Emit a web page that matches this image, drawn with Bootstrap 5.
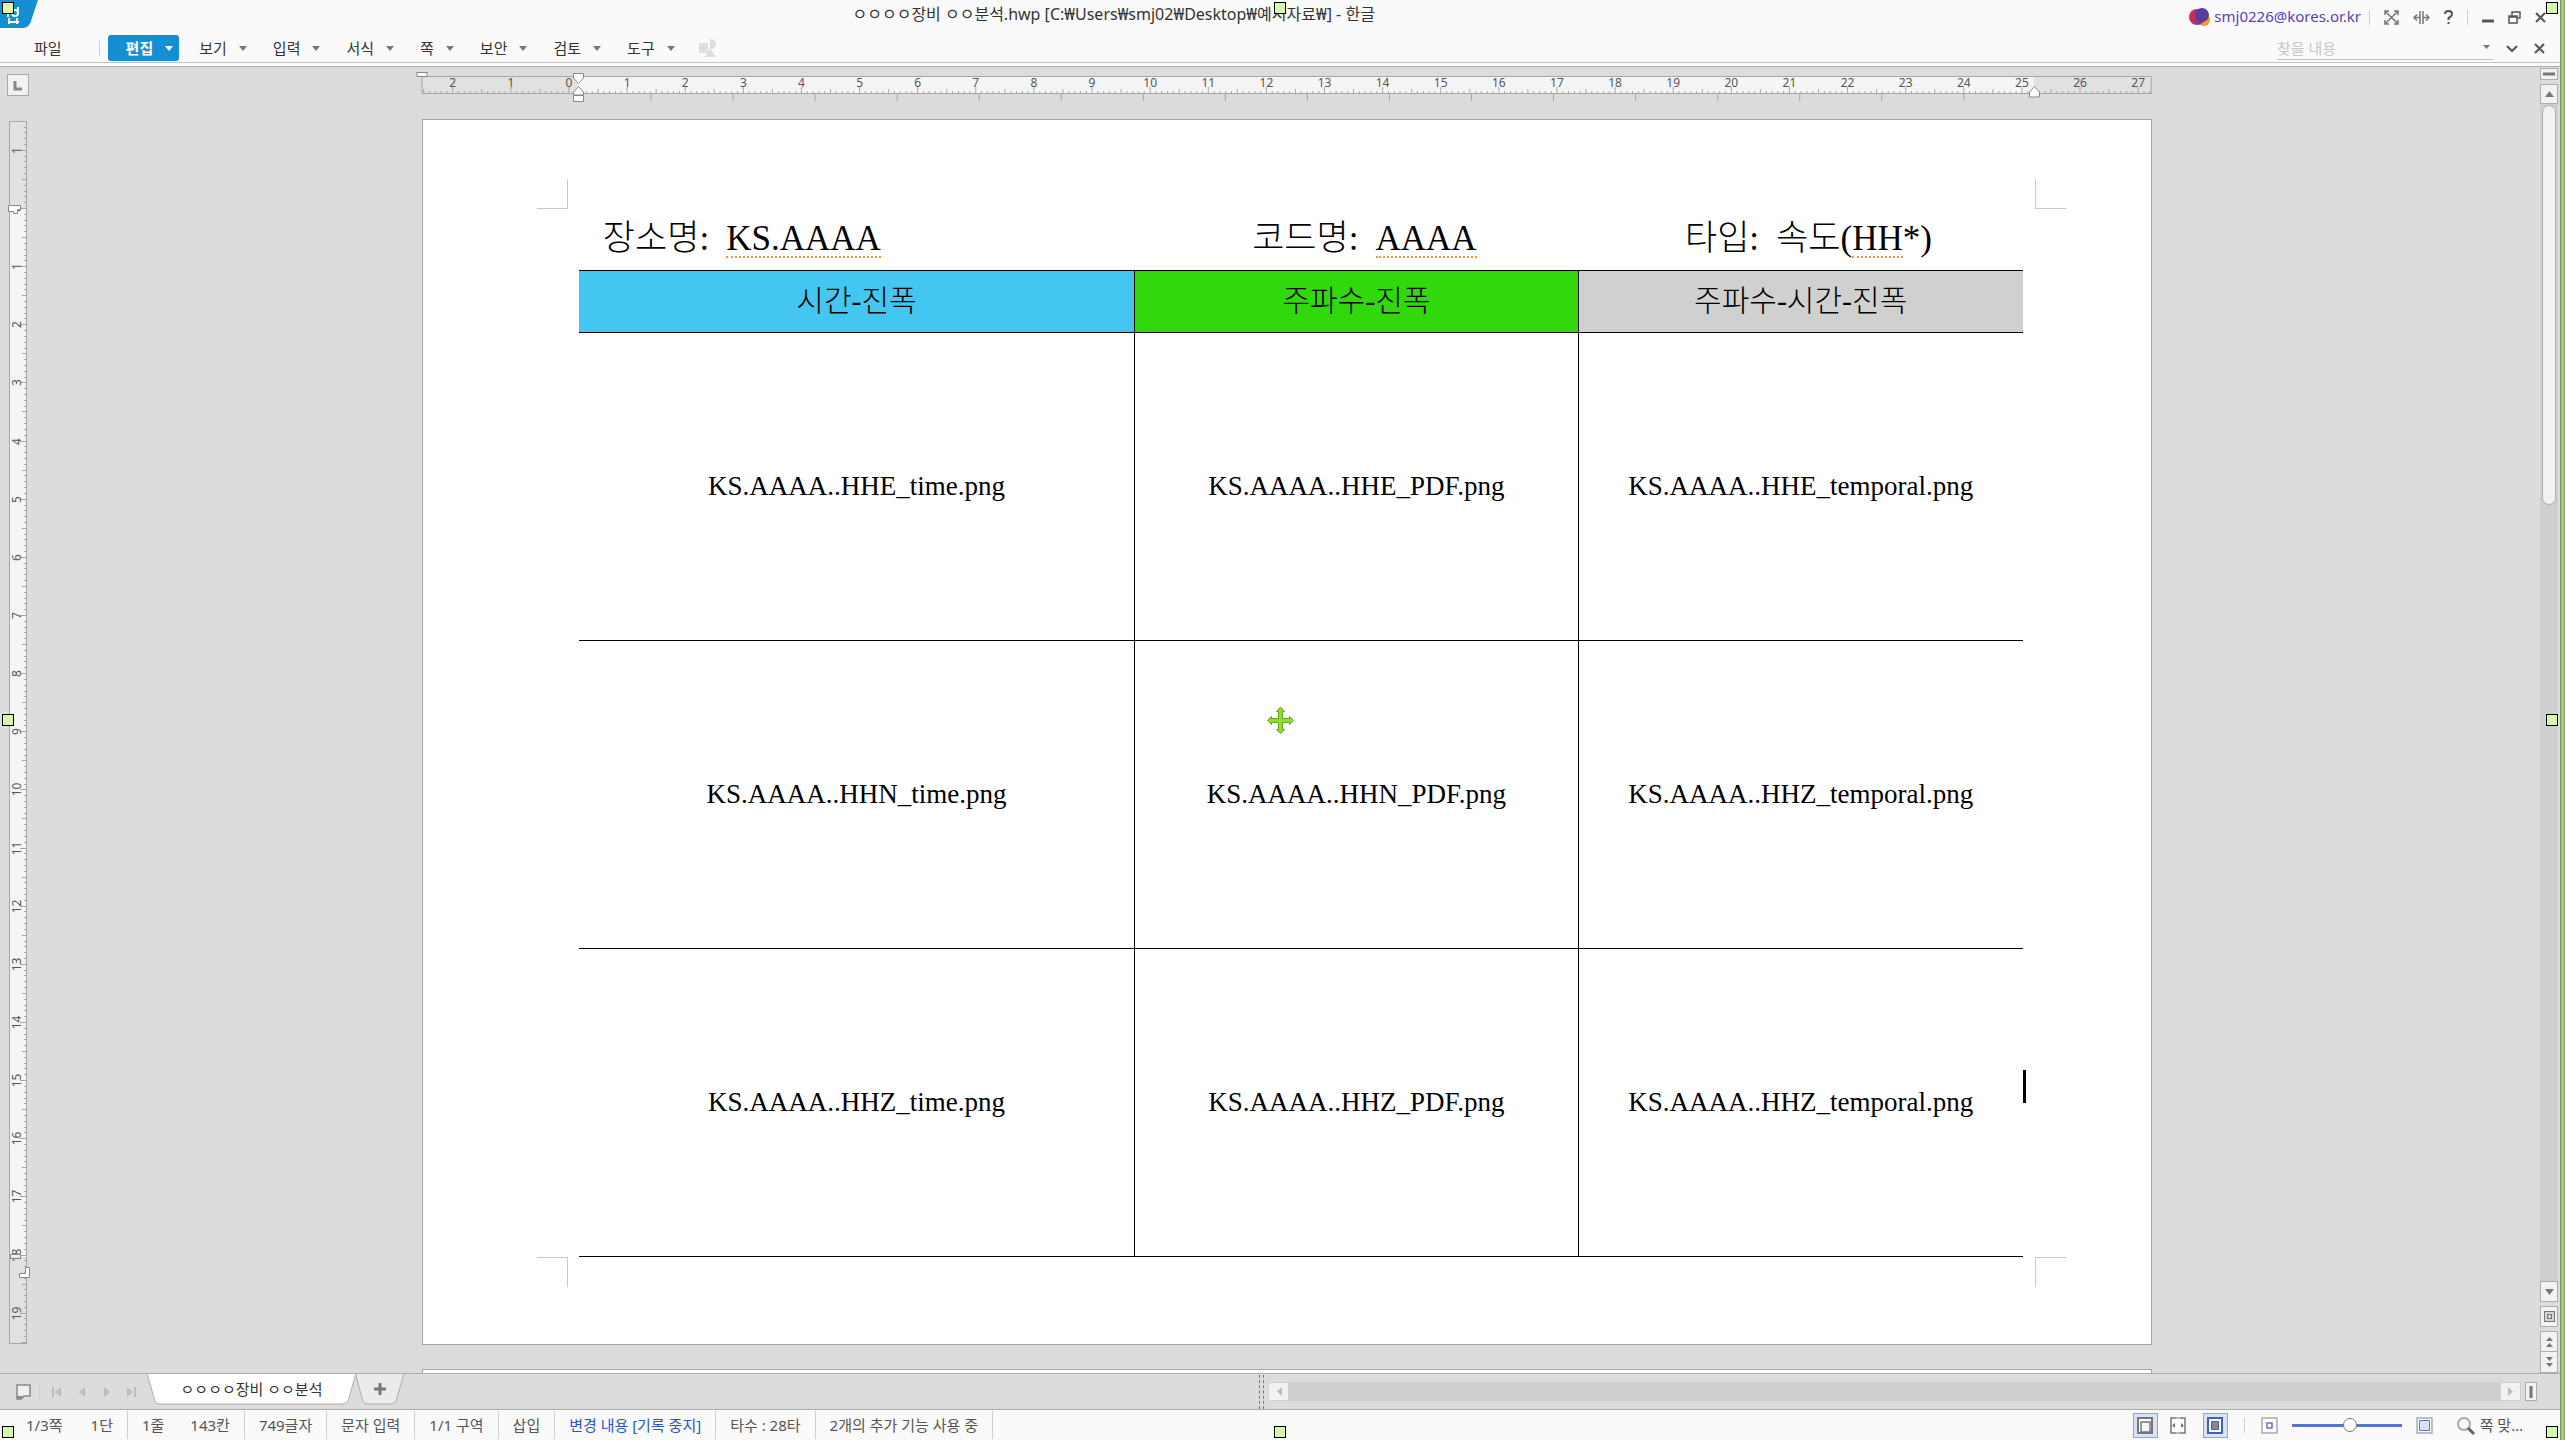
<!DOCTYPE html>
<html lang="ko">
<head>
<meta charset="utf-8">
<meta name="viewport" content="width=device-width, initial-scale=1">
<title>ㅇㅇㅇㅇ장비 ㅇㅇ분석.hwp - 한글</title>
<link rel="stylesheet" href="https://cdn.jsdelivr.net/npm/bootstrap@5.3.0/dist/css/bootstrap.min.css">
<style>
  body { font: 15px/20px "Noto Sans", "Noto Sans CJK KR", sans-serif; color: #333; background: #dcdcdc; }
  svg { display: block; flex: none; }
  button { border: 0; background: none; padding: 0; color: inherit; line-height: 20px; }
  .app-head { background: #fafafa; height: 67px; border-bottom: 1px solid #adadad; }
  .head-rows { height: 63px; border-bottom: 1px solid #c4c4c4; }
  .title-row { height: 34px; }
  .title-text { padding-bottom: 6px; font-size: 16px; }
  .title-tools { gap: 14px; padding-right: 19px; }
  .account { color: #5a3fb5; text-decoration: none; padding-bottom: 2px; }
  .v-sep { width: 1px; height: 15px; background: #d0d0d0; }
  .menu-row { height: 28px; }
  .menu-btn { height: 26px; padding: 0 6px 0 18px; gap: 12px; border-radius: 3px; font-family: "Noto Sans CJK KR", sans-serif; }
  .menu-btn.is-on { background: #148fd2; color: #fff; font-weight: 700; }
  .menu-btn::after { content: ""; border: 4px solid transparent; border-top: 5px solid #777; border-bottom: 0; }
  .menu-btn.is-on::after { border-top-color: #fff; }
  .menu-file { padding: 0 37px 0 34px; font-family: "Noto Sans CJK KR", sans-serif; }
  .find-box { width: 217px; border-bottom: 1px solid #c4c4c4; }
  .find-box input { border: 0; background: none; padding: 0; outline: 0; width: 190px; height: 22px; }
  .find-box input::placeholder { color: #c6c6c6; }
  .side-col { width: 34px; }
  .tab-kind { width: 22px; height: 22px; margin: 7px 0 1px 7px; background: #f2f2f2; border: 1px solid #a8a8a8; }
  .sheet { width: 69%; background: #fff; border: 1px solid #a6a6a6; }
  .sheet-main { height: 1226px; padding: 91px 5.1% 0 6.2%; }
  .crop-mark { position: absolute; width: 31px; height: 30px; border: 0 solid #c8c8c8; }
  .mark-tl { left: 6.6%; top: 59px; border-width: 0 1px 1px 0; }
  .mark-tr { right: 4.900%; top: 59px; border-width: 0 0 1px 1px; }
  .mark-bl { left: 6.6%; bottom: 57px; border-width: 1px 1px 0 0; }
  .mark-br { right: 4.900%; bottom: 57px; border-width: 1px 0 0 1px; }
  .doc { font-family: "Liberation Serif", "Noto Sans CJK KR", serif; color: #000; font-weight: 300; }
  .doc-head { height: 59px; padding-top: 3px; font-size: 35px; line-height: 50px; }
  .doc-head > div { gap: 17px; }
  .c-a { width: 38.5%; } .c-b { width: 30.7%; } .c-c { width: 30.8%; }
  .spell { border-bottom: 2px dotted #e9964d; line-height: 34px; display: inline-block; }
  .doc-table { width: 100%; table-layout: fixed; border-collapse: collapse; font-size: 27px; text-align: center; }
  .doc-table th { height: 62px; font-size: 30px; font-weight: 300; }
  .doc-table th, .doc-table td { border: 1px solid #000; vertical-align: middle; padding: 0 0 2px; }
  .doc-table tr > :first-child { border-left: 0; }
  .doc-table tr > :last-child { border-right: 0; }
  .doc-table td { height: 308px; }
  .bg-time { background: #43c7f1; } .bg-freq { background: #31d80b; } .bg-both { background: #d0d0d0; }
  .caret { position: absolute; right: -3px; top: 121px; width: 3px; height: 33px; background: #000; }
  .scroll-col { width: 25px; padding: 1px 7px 0 0; }
  .s-btn { background: #f2f2f2; border: 1px solid #adadad; display: flex; align-items: center; justify-content: center; flex: none; }
  .s-track { background: #cfcfcf; }
  .s-thumb { height: 400px; background: #f2f2f2; border: 1px solid #adadad; border-radius: 7px; margin: 1px 2px; }
  .tab-bar { height: 37px; border-top: 1px solid #adadad; border-bottom: 1px solid #adadad; }
  .tab-side { width: 49.1%; }
  .doc-tab { background: none; position: relative; height: 31px; margin-left: 11px; }
  .doc-tab span { position: absolute; left: 0; right: 0; top: 5px; }
  .h-track { background: #cfcfcf; height: 19px; }
  .h-btn { width: 21px; height: 19px; background: #f2f2f2; border: 1px solid #d0d0d0; }
  .splitter { width: 5px; height: 34px; border: dashed #777; border-width: 0 1px; }
  .status { height: 30px; background: #fafafa; color: #555; font-size: 15px; padding-left: 12px; }
  .status > .st { padding: 0 14px; line-height: 28px; white-space: nowrap; }
  .status > .st-line { border-right: 1px solid #d0d0d0; }
  .status > .st-link { color: #2a55c4; }
  .status-tools { padding-right: 42px; }
  .view-btn { width: 25px; height: 25px; display: flex; align-items: center; justify-content: center; }
  .view-btn.is-on { background: #dae3f6; border: 1px solid #8da5dc; }
  .zoom-range { -webkit-appearance: none; appearance: none; width: 110px; height: 15px; background: none; margin: 0 14px; }
  .zoom-range::-webkit-slider-runnable-track { height: 3px; background: #5876c9; }
  .zoom-range::-webkit-slider-thumb { -webkit-appearance: none; width: 14px; height: 14px; margin-top: -6px; border-radius: 50%; background: #fff; border: 1px solid #777; }
  .overlay { position: absolute; inset: 0; padding: 2px 7px 2px 2px; pointer-events: none; }
  .grip { width: 12px; height: 12px; background: #d6f7ac; border: 1px solid #000; }
  .edge { position: absolute; right: 0; top: 0; bottom: 0; width: 5px; background: #95da45; border-left: 1px solid #7d8a86; border-right: 1px solid #7fae55; }
  .ruler text { font: 12px "Noto Sans", sans-serif; fill: #555; text-anchor: middle; }
</style>
<script src="https://cdn.jsdelivr.net/npm/bootstrap@5.3.0/dist/js/bootstrap.bundle.min.js"></script>
</head>
<body class="vh-100 overflow-hidden position-relative d-flex flex-column">

<header class="app-head flex-shrink-0">
  <div class="head-rows">
    <div class="title-row d-flex align-items-center">
      <svg class="align-self-start" width="38" height="28" viewBox="0 0 38 28"><path d="M0 0h38l-7 21q-2 7-8 7H0z" fill="#148fd2"/><g fill="none" stroke="#fff" stroke-width="2"><path d="M9 18v6M9 22h10M17 18v6"/><circle cx="15" cy="13" r="3"/><path d="M8 9v8M18 7v4"/></g></svg>
      <div class="title-text flex-grow-1 text-center">ㅇㅇㅇㅇ장비 ㅇㅇ분석.hwp [C:₩Users₩smj02₩Desktop₩예시자료₩] - 한글</div>
      <div class="title-tools d-flex align-items-center">
        <div class="d-flex align-items-center">
          <svg width="21" height="18" viewBox="0 0 21 18"><defs><linearGradient id="lg" x1="0" x2="1"><stop offset="0" stop-color="#f0283c"/><stop offset=".7" stop-color="#6a3c98"/></linearGradient></defs><circle cx="15" cy="12" r="6" fill="#f79a1f"/><circle cx="8" cy="9" r="8" fill="url(#lg)"/><circle cx="13" cy="7" r="7" fill="#5a3c9c"/></svg>
          <a href="#" class="account ms-1">smj0226@kores.or.kr</a>
          <div class="v-sep ms-2"></div>
        </div>
        <button aria-label="전체 화면"><svg width="15" height="15" viewBox="0 0 15 15" fill="none" stroke="#777" stroke-width="1.500"><path d="M1 5V1h4M10 1h4v4M14 10v4h-4M5 14H1v-4M2 2l11 11M13 2L2 13"/></svg></button>
        <button aria-label="너비"><svg width="17" height="15" viewBox="0 0 17 15" fill="none" stroke="#777"><path d="M7 1v13M10 1v13" stroke-width="1.500"/><path d="M1 7.500h6M10 7.500h6M4 4.500l-3 3 3 3M13 4.500l3 3-3 3" stroke-width="1.500"/></svg></button>
        <button aria-label="도움말"><svg width="9" height="14" viewBox="0 0 9 14" fill="none" stroke="#555" stroke-width="2"><path d="M1 4q0-3 3.500-3T8 4q0 2-2 3T4.500 10M4.500 12v2"/></svg></button>
        <div class="v-sep"></div>
        <button aria-label="최소화"><svg width="12" height="14"><path d="M0 11h12" stroke="#555" stroke-width="3"/></svg></button>
        <button aria-label="이전 크기로"><svg width="13" height="13" viewBox="0 0 13 13" fill="none" stroke="#555" stroke-width="1.500"><path d="M4 4V1h8v6H9M1 5h8v7H1zM1 6h8"/></svg></button>
        <button aria-label="닫기"><svg width="11" height="11" viewBox="0 0 11 11"><path d="M1 1l9 9M10 1l-9 9" stroke="#555" stroke-width="2"/></svg></button>
      </div>
    </div>
    <nav class="menu-row d-flex align-items-center">
      <button class="menu-file">파일</button>
      <div class="v-sep me-2"></div>
      <div class="d-flex gap-0 flex-grow-1 align-items-center" id="menus"></div>
      <div class="find-box d-flex align-items-center justify-content-between pe-1"><input type="text" placeholder="찾을 내용" aria-label="찾을 내용"><svg width="7" height="5"><path d="M0 0h7l-3.500 4z" fill="#777"/></svg></div>
      <button class="ms-2 ps-1" aria-label="다음"><svg width="12" height="9" viewBox="0 0 12 9"><path d="M1 2l5 5 5-5" fill="none" stroke="#555" stroke-width="2"/></svg></button>
      <button class="ms-3 me-3 pe-1" aria-label="찾기 닫기"><svg width="11" height="11" viewBox="0 0 11 11"><path d="M1 1l9 9M10 1l-9 9" stroke="#555" stroke-width="2"/></svg></button>
    </nav>
  </div>
</header>

<main class="flex-grow-1 d-flex overflow-hidden">
  <div class="side-col flex-shrink-0 d-flex flex-column">
    <button class="tab-kind" aria-label="탭 종류"><svg width="20" height="20"><path d="M7 6v8h7" fill="none" stroke="#888" stroke-width="3"/></svg></button>
    <svg class="ruler" id="vruler" width="34" height="1260"></svg>
  </div>

  <div class="flex-grow-1 d-flex flex-column align-items-center">
    <svg class="ruler" id="hruler" width="69%" height="52" overflow="visible"></svg>
    <article class="sheet sheet-main position-relative flex-shrink-0 doc">
      <i class="crop-mark mark-tl"></i><i class="crop-mark mark-tr"></i><i class="crop-mark mark-bl"></i><i class="crop-mark mark-br"></i>
      <div class="doc-head d-flex">
        <div class="c-a d-flex ps-4"><span>장소명:</span><span><span class="spell">KS.AAAA</span></span></div>
        <div class="c-b d-flex justify-content-center ps-3"><span>코드명:</span><span><span class="spell">AAAA</span></span></div>
        <div class="c-c d-flex justify-content-center ps-3"><span>타입:</span><span>속도(<span class="spell">HH</span>*)</span></div>
      </div>
      <table class="doc-table">
        <thead><tr><th class="c-a bg-time">시간-진폭</th><th class="c-b bg-freq">주파수-진폭</th><th class="c-c bg-both">주파수-시간-진폭</th></tr></thead>
        <tbody>
          <tr><td>KS.AAAA..HHE_time.png</td><td>KS.AAAA..HHE_PDF.png</td><td>KS.AAAA..HHE_temporal.png</td></tr>
          <tr><td>KS.AAAA..HHN_time.png</td><td>KS.AAAA..HHN_PDF.png</td><td>KS.AAAA..HHZ_temporal.png</td></tr>
          <tr><td>KS.AAAA..HHZ_time.png</td><td>KS.AAAA..HHZ_PDF.png</td><td class="position-relative">KS.AAAA..HHZ_temporal.png<i class="caret"></i></td></tr>
        </tbody>
      </table>
    </article>
    <article class="sheet flex-grow-1 border-bottom-0 mt-4 flex-shrink-0"></article>
  </div>

  <div class="scroll-col flex-shrink-0 d-flex flex-column">
    <button class="s-btn mb-1" style="height:12px" aria-label="나누기"><svg width="12" height="4"><path d="M0 2h12" stroke="#777" stroke-width="3"/></svg></button>
    <button class="s-btn" style="height:20px" aria-label="위로"><svg width="9" height="6"><path d="M0 6h9L4.500 0z" fill="#777"/></svg></button>
    <div class="s-track flex-grow-1"><div class="s-thumb"></div></div>
    <button class="s-btn" style="height:21px" aria-label="아래로"><svg width="9" height="6"><path d="M0 0h9L4.500 6z" fill="#777"/></svg></button>
    <button class="s-btn my-1" style="height:21px" aria-label="찾아가기"><svg width="11" height="11" fill="none" stroke="#777"><path d="M.500.500h10v10H.500zM3.500 3.500h4v4h-4z" stroke-width="1.500"/></svg></button>
    <button class="s-btn" style="height:21px" aria-label="이전 쪽"><svg width="7" height="10" fill="#777"><path d="M0 4h7L3.500 0zM0 10h7L3.500 6z"/></svg></button>
    <button class="s-btn border-top-0" style="height:21px" aria-label="다음 쪽"><svg width="7" height="10" fill="#777"><path d="M0 0h7L3.500 4zM0 6h7l-3.500 4z"/></svg></button>
  </div>
</main>

<div class="tab-bar d-flex flex-shrink-0">
  <div class="tab-side d-flex align-items-center ps-3">
    <div class="d-flex align-items-center flex-shrink-0">
      <button aria-label="문서 목록"><svg width="15" height="16" viewBox="0 0 15 16"><path d="M1 1h13v11H8l-3 3H1z" fill="#f0f0f0" stroke="#888" stroke-width="1.500"/><path d="M1 12h5v3H1z" fill="#888"/></svg></button>
      <div class="v-sep ms-2 me-2"></div>
      <svg width="88" height="12" fill="#bdbdbd"><path d="M4 1h2v10H4zM13 1v10L7 6zM37 1v10l-6-5zM56 1v10l6-5zM79 1v10l6-5zM86 1h2v10h-2z"/></svg>
    </div>
    <button class="doc-tab align-self-start" aria-label="ㅇㅇㅇㅇ장비 ㅇㅇ분석"><svg width="209" height="31" viewBox="0 0 209 31"><path d="M0-1l7 25q1 6 6 6h182q5 0 7-6l7-25z" fill="#fff" stroke="#adadad"/></svg><span>ㅇㅇㅇㅇ장비 ㅇㅇ분석</span></button>
    <button class="align-self-start" aria-label="새 탭"><svg width="49" height="31" viewBox="0 0 49 31"><path d="M0 2l6 22q1 6 6 6h23q5 0 6-6l7-25H0z" fill="#ebebeb" stroke="#adadad"/><path d="M24 9v12M18 15h12" stroke="#777" stroke-width="3"/></svg></button>
  </div>
  <div class="d-flex align-items-center flex-grow-1 pe-4">
    <div class="flex-grow-1 d-flex align-items-center">
      <div class="splitter me-1"></div>
      <button class="s-btn h-btn" aria-label="왼쪽으로"><svg width="6" height="9"><path d="M6 0v9L1 4.500z" fill="#bbb"/></svg></button>
      <div class="h-track flex-grow-1"></div>
      <button class="s-btn h-btn" aria-label="오른쪽으로"><svg width="6" height="9"><path d="M0 0v9l5-4.500z" fill="#bbb"/></svg></button>
      <button class="s-btn ms-1 me-1" style="height:19px;width:12px" aria-label="나누기"><svg width="4" height="12"><path d="M2 0v12" stroke="#777" stroke-width="3"/></svg></button>
    </div>
  </div>
</div>

<footer class="status d-flex align-items-center flex-shrink-0">
  <div class="st">1/3쪽</div><div class="st st-line">1단</div>
  <div class="st pe-2">1줄</div><div class="st st-line ms-1">143칸</div>
  <div class="st st-line">749글자</div><div class="st st-line">문자 입력</div>
  <div class="st st-line">1/1 구역</div><div class="st st-line">삽입</div>
  <div class="st st-line st-link">변경 내용 [기록 중지]</div><div class="st st-line">타수 : 28타</div>
  <div class="st st-line">2개의 추가 기능 사용 중</div>
  <div class="status-tools ms-auto d-flex align-items-center">
    <button class="view-btn is-on" aria-label="쪽 윤곽"><svg width="16" height="17" fill="none" stroke="#777"><path d="M1 1h14v15H1z" fill="#fff" stroke-width="2"/><path d="M4 15V5h9v10z" fill="#f4f6fc" stroke-width="1.500"/></svg></button>
    <button class="view-btn mx-2" aria-label="폭 맞춤"><svg width="16" height="17"><path d="M1 1h14v15H1z" fill="#fff" stroke="#777" stroke-width="1.500"/><path d="M5 6v5L2 8.500zM11 6v5l3-2.500z" fill="#777"/><path d="M6 1h4M6 16h4" stroke="#bbb" stroke-width="2"/></svg></button>
    <button class="view-btn is-on ms-1" aria-label="쪽 맞춤"><svg width="16" height="17"><path d="M1 1h14v15H1z" fill="#fff" stroke="#4563ac" stroke-width="2"/><path d="M4.500 4.500h7v8h-7z" fill="#888" stroke="#4563ac"/></svg></button>
    <div class="v-sep ms-3 me-2"></div>
    <button class="ms-2" aria-label="축소"><svg width="17" height="17"><path d="M1 1h15v15H1z" fill="#fff" stroke="#aaa" stroke-width="1.500"/><path d="M6 6h5v5H6z" fill="none" stroke="#5876c9" stroke-width="1.500"/></svg></button>
    <input class="zoom-range" type="range" min="0" max="100" value="53" aria-label="확대 비율">
    <button aria-label="확대"><svg width="17" height="17"><path d="M1 1h15v15H1z" fill="#fff" stroke="#aaa" stroke-width="1.500"/><path d="M3.500 3.500h10v10h-10z" fill="#dae3f6" stroke="#5876c9"/></svg></button>
    <button class="d-flex align-items-center gap-1 ms-4" aria-label="쪽 맞춤 배율"><svg width="19" height="19" fill="none"><circle cx="7" cy="8" r="6" stroke="#aaa" stroke-width="2"/><path d="M11 12l6 6" stroke="#666" stroke-width="3"/></svg>쪽 맞…</button>
  </div>
</footer>

<div class="overlay d-flex flex-column justify-content-between">
  <div class="d-flex justify-content-between"><i class="grip"></i><i class="grip"></i><i class="grip"></i></div>
  <div class="d-flex justify-content-between align-items-center"><i class="grip"></i>
    <svg width="27" height="27" viewBox="0 0 27 27"><path d="M13.500 0l4 4.500h-2V11.500H22.500v-2l4 4-4 4v-2H15.500V22.500h2l-4 4-4-4h2V15.500H4.500v2l-4-4 4-4v2H11.500V4.500h-2z" fill="#8fdc35" stroke="#63a81c"/></svg>
    <i class="grip"></i></div>
  <div class="d-flex justify-content-between"><i class="grip"></i><i class="grip"></i><i class="grip"></i></div>
  <div class="edge"></div>
</div>

<script>
  document.getElementById('menus').innerHTML = ['편집','보기','입력','서식','쪽','보안','검토','도구'].map((t, i) =>
    `<button class="menu-btn d-flex align-items-center${i ? '' : ' is-on'}" style="margin-right:2px">${t}</button>`).join('') +
    '<svg class="ms-3" width="20" height="18" fill="#ddd"><path d="M0 4h9v10H0zM11 0q6 0 6 5t-6 5zM11 9l6 9H6z"/></svg>';

  // Horizontal ruler: one centimetre is a fixed share of the sheet's width.
  const cm = 3.361, zero = 8.5;
  let h = '<rect x="0" y="9.500" width="100%" height="17" fill="#e1e1e1" stroke="#a6a6a6"/><rect x="9%" y="10" width="84.200%" height="16" fill="#f5f5f5"/>';
  for (let i = -25; i <= 272; i++) {
    const x = zero + i * cm / 10, top = i % 10 === 0 ? 20 : i % 5 === 0 ? 22 : 24;
    h += `<line x1="${x}%" x2="${x}%" y1="${top}" y2="26" stroke="#a6a6a6"/>`;
    if (i % 10 === 0) h += `<text x="${x}%" y="20">${Math.abs(i / 10)}</text>`;
  }
  for (let i = 1; i <= 17; i++) { const x = zero + i * 4.745; h += `<line x1="${x}%" x2="${x}%" y1="27" y2="34" stroke="#a6a6a6"/>`; }
  const pin = 'fill="#fff" stroke="#888"';
  h += `<rect x="-5" y="5.500" width="10" height="4" ${pin}/>
    <svg x="9.050%" overflow="visible"><path d="M-5 6.500H5V11L0 16.500-5 11zM0 19.500L5 25v3H-5v-3zM-5 28.500H5v6H-5z" ${pin}/></svg>
    <svg x="93.250%" overflow="visible"><path d="M0 19.500L5 25v5H-5v-5z" ${pin}/></svg>`;
  document.getElementById('hruler').innerHTML = h;

  // Vertical ruler
  const v0 = 111, step = 58.14;
  let v = `<rect x="9.500" y="24.500" width="17" height="1222" fill="#e1e1e1" stroke="#a6a6a6"/><rect x="10" y="${v0}" width="16" height="1049" fill="#f5f5f5"/>`;
  for (let i = -14; i <= 195; i++) {
    const y = Math.round(v0 + i * step / 10) + .5, left = i % 10 === 0 ? 20 : i % 5 === 0 ? 22 : 24;
    v += `<line x1="${left}" x2="26" y1="${y}" y2="${y}" stroke="#a6a6a6"/>`;
    if (i % 10 === 0) v += `<text transform="translate(21 ${y}) rotate(-90)">${Math.abs(i / 10)}</text>`;
  }
  v += `<path d="M8.500 ${v0 - 2.5}h12v4h-3v4h-4v-2h-5z" ${pin}/><path d="M19.500 1180.500h10v-10h-4v6h-6z" ${pin}/><path d="M10.500 1157.500h10v4h-10z" fill="none" stroke="#888"/>`;
  document.getElementById('vruler').innerHTML = v;
</script>
</body>
</html>
